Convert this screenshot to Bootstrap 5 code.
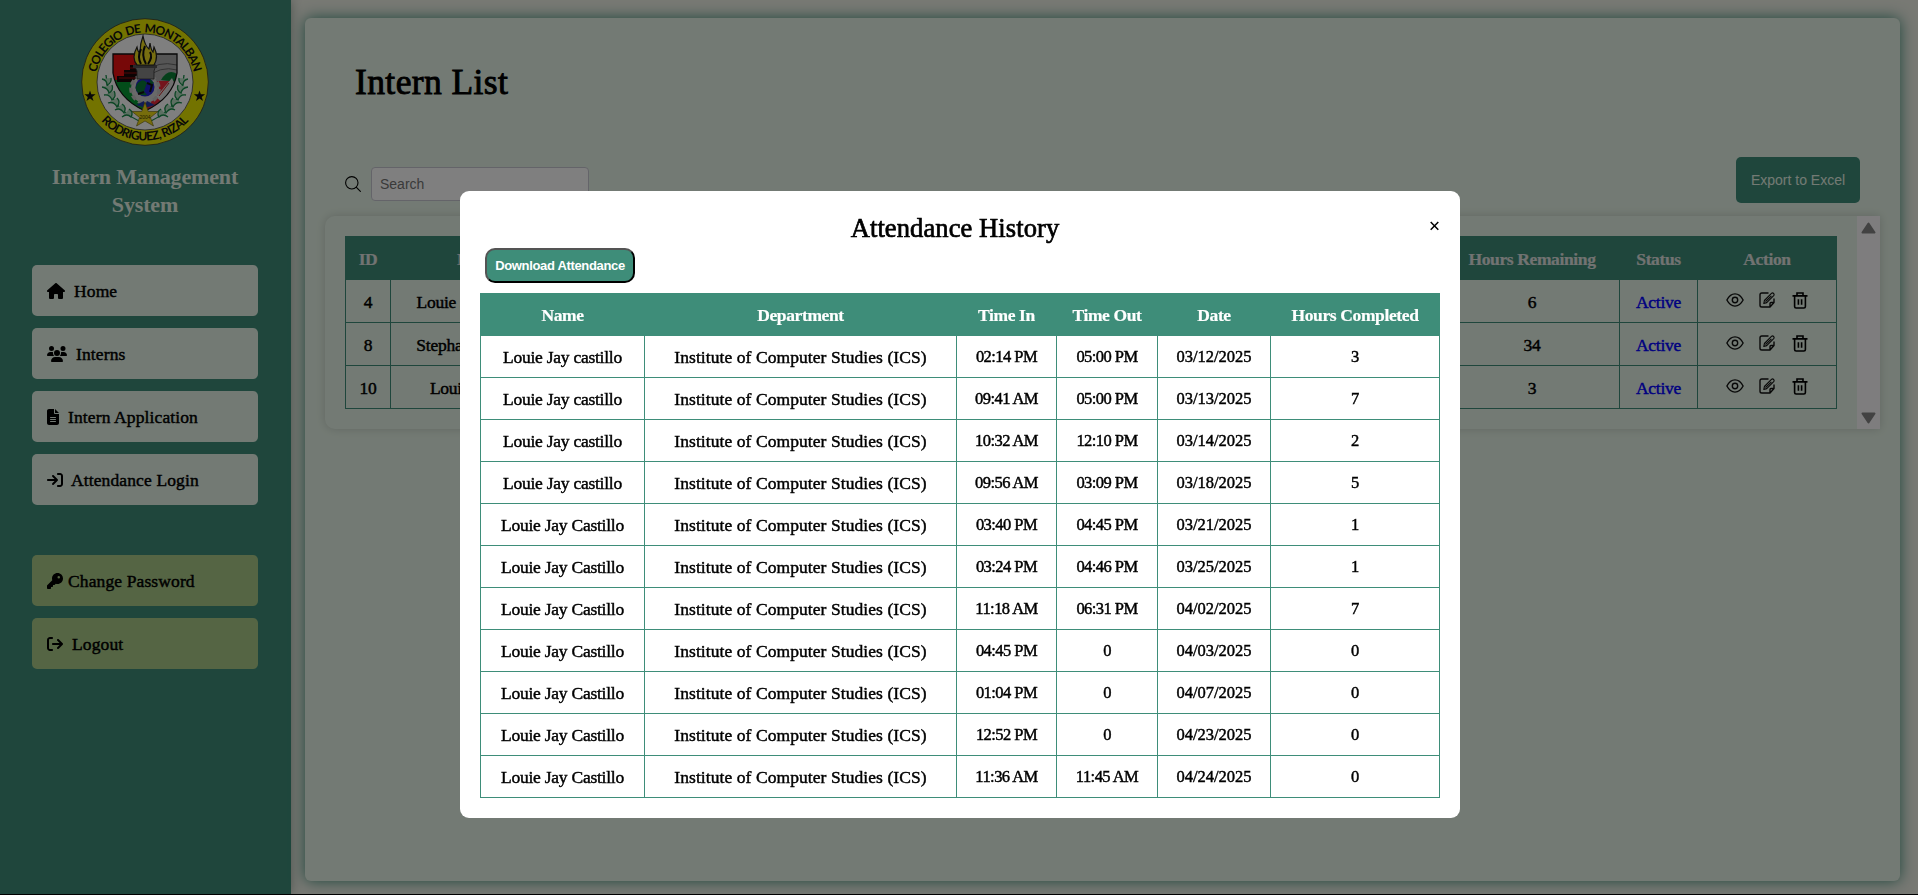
<!DOCTYPE html>
<html lang="en">
<head>
<meta charset="utf-8">
<meta name="viewport" content="width=device-width, initial-scale=1">
<title>Intern List</title>
<link href="https://cdn.jsdelivr.net/npm/bootstrap@5.3.0/dist/css/bootstrap.min.css" rel="stylesheet">
<style>
:root{--green:#3e8d79;--mint:#e7f5e8}
body{font-family:"Liberation Serif",serif;font-size:17.5px;line-height:24px;color:#000;background:#f0f2e8;height:895px;overflow:hidden;border-bottom:1px solid #000;-webkit-text-stroke:.45px}
.sidebar{width:291px;background:var(--green);box-shadow:0 0 10px rgba(60,80,70,.45);padding:18px 33px 0 32px}
.seal{width:128px;height:128px}
.brand{font-size:22px;line-height:28px;letter-spacing:-.15px;font-weight:700;color:var(--mint);margin:17px 0 46px;-webkit-text-stroke:0}
.side-link{height:51px;border-radius:5px;background:var(--mint);color:#000;padding:1px 0 0 15px;letter-spacing:.12px;text-decoration:none}
.side-link.alt{background:#aacb88}
.side-link svg{height:16px;fill:#000;flex:none;-webkit-text-stroke:0}
.side-group{gap:12px}
.main-wrap{padding:18px 18px 13px 14px}
.panel{background:var(--mint);border-radius:6px;box-shadow:0 0 15px var(--green);padding:0 20px}
.page-title{font-size:35.5px;letter-spacing:.4px;line-height:40px;margin:44px 0 0 30px;font-weight:400;-webkit-text-stroke:.9px}
.toolbar{margin-top:37px;height:77px;padding:0 20px}
.sans{font-family:"Liberation Sans",Arial,sans-serif;font-size:14px;-webkit-text-stroke:0}
.search-box{width:218px;height:34px;border:1px solid #c9c9d3;border-radius:4px;padding:0 8px;margin-left:10px}
.search-box::placeholder{color:#757575;opacity:1}
.btn-export{width:124px;height:46px;background:var(--green);color:var(--mint);border-radius:5px;border:0}
.list-card{height:213px;border-radius:10px 0 0 10px;box-shadow:0 0 10px rgba(0,0,0,.16);overflow:hidden}
.scroller{width:23px;background:#fcfafc;padding:6px 0 5px}
.grid-table{border-collapse:collapse;table-layout:fixed;text-align:center;line-height:20px}
.grid-table td,.grid-table th{border:1px solid var(--green);padding:2px 0 0;white-space:nowrap;overflow:hidden}
.grid-table th{background:var(--green);font-weight:700;color:#fff;letter-spacing:-.38px;-webkit-text-stroke:.2px}
.grid-table td{letter-spacing:-.25px}
.interns{width:1492px}
.interns th{height:43px;color:#e4e6e4}
.interns td{height:43px}
.status{color:#00f}
.overlay{background:rgba(0,0,0,.5);height:894px;overflow:hidden}
.overlay .modal-dialog{max-width:1000px;margin:191px auto 0 460px}
.overlay .modal-content{height:627px;border:0;border-radius:9px;padding:20px;color:#000}
.modal-heading{font-size:26.5px;letter-spacing:.1px;line-height:34px;padding-right:10px;height:34px;-webkit-text-stroke:.7px}
.close-x{width:14px;height:24px;margin-left:-14px;margin-top:3px}
.btn-dl{width:150px;height:35px;margin:3px 0 10px 5px;font-size:13px;font-weight:700;color:#fff;background:var(--green);border:2px outset #000;border-radius:10px;padding:0;letter-spacing:-.34px}
.attend{width:960px}
.attend th{height:42px}
.attend td{height:42px}
.grid-table.attend td,.grid-table.attend th{padding-top:0}
.attend .wide{letter-spacing:.07px}
.grid-table.attend .tm,.grid-table.attend .dt,.grid-table.attend .num{font-size:16.5px;padding-top:1px}
.attend .tm{letter-spacing:-.55px}
.attend .dt{letter-spacing:0}
</style>
</head>
<body>
<svg width="0" height="0" class="position-absolute">
  <defs>
    <symbol id="eye" viewBox="0 0 18 14"><g fill="none" stroke="#111" stroke-width="1.4"><path d="M.9 7C3 3 6 .9 9 .9S15 3 17.100 7C15 11 12 13.100 9 13.100S3 11 .9 7z"/><circle cx="9" cy="7" r="2.700"/></g></symbol>
    <symbol id="edit" viewBox="0 0 16 16"><g fill="none" stroke="#111" stroke-width="1.400" stroke-linejoin="round"><path d="M9.500 1H2.800Q1 1 1 2.800V13.200Q1 15 2.800 15H11M15 6.500V10.500L11 15V11.500Q11 10.500 12 10.500H15"/><path stroke-width="1.100" d="M4.800 11.500L5.400 8.500L12.700 1.200Q13.600.5 14.700 1.500Q15.500 2.600 14.700 3.600L7.700 10.600z M6.500 9.700L12.400 3.800"/></g></symbol>
    <symbol id="trash" viewBox="0 0 16 17"><g fill="none" stroke="#000" stroke-width="1.600"><path d="M.5 3.900H15.500M5 3.900V1H11V3.900M2.600 3.900V14.500Q2.600 16 4.100 16H11.900Q13.400 16 13.400 14.500V3.900M6.400 7.300V12.800M9.600 7.300V12.800"/></g></symbol>
  </defs>
</svg>
<div class="d-flex h-100">
  <nav class="sidebar d-flex flex-column flex-shrink-0">
    <svg class="seal mx-auto" viewBox="0 0 128 128">
      <defs>
        <path id="arcTop" d="M14.500 64A49.500 49.500 0 0 1 113.500 64"/>
        <path id="arcBot" d="M5.500 64A58.500 58.500 0 0 0 122.500 64"/>
        <clipPath id="shieldClip"><path d="M32 36H96V55Q92 80 64 93Q36 80 32 55z"/></clipPath>
      </defs>
      <circle cx="64" cy="64" r="63.300" fill="#e6e600" stroke="#333" stroke-width=".8"/>
      <circle cx="64" cy="64" r="48" fill="#fff" stroke="#444" stroke-width=".8"/>
      <g clip-path="url(#shieldClip)">
        <rect x="32" y="36" width="32" height="28" fill="#ee1010"/><rect x="64" y="36" width="32" height="28" fill="#aaa"/>
        <rect x="32" y="62" width="32" height="32" fill="#079b35"/><rect x="64" y="63" width="32" height="32" fill="#e92b3b"/>
        <path d="M43 52h6v-5h11v17H36v-6h7z" fill="#180808"/><path d="M38 60h22M42 55h18M48 50h12" stroke="#c11" stroke-width=".8"/>
        <path d="M64 55Q76 42 96 47M64 61Q79 47 96 52" fill="none" stroke="#666"/>
        <path d="M80 62Q87 50 96 56V64z" fill="#0a8135"/><path d="M75 79L91 60L95 69L82 85" fill="#ddd"/><path d="M78 78L88 65M82 84L94 67" stroke="#c22"/>
      </g>
      <path d="M32 36H96V55Q92 80 64 93Q36 80 32 55z" fill="none" stroke="#111" stroke-width="1.300"/>
      <circle cx="64" cy="71" r="14" fill="#d3d3d3" stroke="#c4c4c4" stroke-width="3.500" stroke-dasharray="5 3"/>
      <circle cx="64" cy="69" r="9.500" fill="#2020d0"/><path d="M56 66Q62 59 66 65L63 73L66 77Q57 79 54.500 70zM69 61l4 4-4 2z" fill="#087838"/><path d="M66 65l5 2-2 7M57 76l6-2" stroke="#111" stroke-width="2" fill="none"/>
      <path d="M53 47H75L73 53V61H56V53z" fill="#888" stroke="#333" stroke-width=".8"/><path d="M52 48.500H76" stroke="#555" stroke-width="3"/>
      <path d="M56 47Q50 40 56 29Q57 35 59 34Q59 26 62 18Q64 28 68 31L69 25Q70 32 72 34L73 29Q78 39 73 47z" fill="#eedc22" stroke="#222" stroke-width="1.200"/>
      <path d="M60 46Q56 39 60 31M65 46Q60 37 64 28M67 46Q72 39 69 34" fill="none" stroke="#111" stroke-width="2"/>
      <g fill="none" stroke="#188c4a" stroke-width="1.300">
        <path d="M25 57Q27 88 58 103"/><path d="M103 57Q101 88 70 103"/>
      </g>
      <g fill="#b8dfc4" stroke="#188c4a" stroke-width="1.300">
        <path d="M21 61q5 1 5 6 5-2 4-7M21 69q6 1 7 6 5-3 3-8M23 77q6-1 8 5 5-4 2-9M27 85q6-2 9 4 4-5 0-9M34 92q5-3 9 3 3-6-2-9M41 99q5-4 9 0 3-5-2-8"/>
        <path d="M107 61q-5 1-5 6-5-2-4-7M107 69q-6 1-7 6-5-3-3-8M105 77q-6-1-8 5-5-4-2-9M101 85q-6-2-9 4-4-5 0-9M94 92q-5-3-9 3-3-6 2-9M87 99q-5-4-9 0-3-5 2-8"/>
      </g>
      <path d="M55 87l8-4 1 4 2-4 8 4-7 2h-5z" fill="#2538a8"/>
      <path d="M64 84L67.300 93.500H77L69.500 99.500L72.500 108L64 103L55.500 108L58.500 99.500L51 93.500H60.700z" fill="#eedb18" stroke="#665b10" stroke-width=".6"/>
      <text x="64" y="100.500" text-anchor="middle" font-family="Liberation Sans" font-size="5" fill="#443a00" style="-webkit-text-stroke:0">2004</text>
      <g font-family="Lato,sans-serif" font-weight="700" font-size="12" fill="#111" style="-webkit-text-stroke:.2px">
        <text textLength="136"><textPath href="#arcTop" startOffset="50%" text-anchor="middle" textLength="136">COLEGIO&#160; DE&#160; MONTALBAN</textPath></text>
        <text textLength="99"><textPath href="#arcBot" startOffset="50%" text-anchor="middle" textLength="99">RODRIGUEZ, RIZAL</textPath></text>
      </g>
      <g fill="#111"><path d="M9 72.500l1.300 3.800h4.300l-3.400 2.600 1.300 4.200L9 80.600l-3.500 2.500 1.300-4.200-3.400-2.600h4.300z"/><path transform="translate(109.500)" d="M9 72.500l1.300 3.800h4.300l-3.400 2.600 1.300 4.200L9 80.600l-3.500 2.500 1.300-4.200-3.400-2.600h4.300z"/></g>
    </svg>
    <div class="brand text-center">Intern Management<br>System</div>
    <div class="side-group d-flex flex-column">
      <a class="side-link d-flex align-items-center"><svg width="18" viewBox="0 0 576 512"><path d="M575.800 255.500c0 18-15 32.100-32 32.100h-32l.7 160.200V472c0 22.100-17.900 40-40 40H392c-22.100 0-40-17.900-40-40V384c0-17.700-14.300-32-32-32H256c-17.700 0-32 14.300-32 32v88c0 22.100-17.900 40-40 40H104c-22.100 0-40-17.900-40-40V287.600H32c-18 0-32-14-32-32.100c0-9 3-17 10-24L266.400 8c7-7 15-8 22-8s15 2 21 7L564.800 231.500c8 7 12 15 11 24z"/></svg><span style="margin-left:9px">Home</span></a>
      <a class="side-link d-flex align-items-center"><svg width="20" viewBox="0 0 640 512"><path d="M144 0a80 80 0 1 1 0 160A80 80 0 1 1 144 0zM512 0a80 80 0 1 1 0 160A80 80 0 1 1 512 0zM0 298.700C0 239.800 47.800 192 106.700 192h42.700c15.900 0 31 3.500 44.600 9.700c-1.300 7.200-1.900 14.700-1.900 22.300c0 38.200 16.800 72.500 43.300 96H21.300C9.600 320 0 310.400 0 298.700zM405.300 320c26.600-23.500 43.300-57.800 43.300-96c0-7.600-.7-15-1.900-22.300c13.600-6.300 28.700-9.700 44.600-9.700h42.700C592.200 192 640 239.800 640 298.700c0 11.800-9.600 21.300-21.300 21.300H405.300zM224 224a96 96 0 1 1 192 0 96 96 0 1 1 -192 0zM128 485.300C128 411.700 187.700 352 261.300 352H378.700C452.300 352 512 411.700 512 485.300c0 14.700-11.900 26.700-26.700 26.700H154.700c-14.700 0-26.700-11.900-26.700-26.700z"/></svg><span style="margin-left:9px">Interns</span></a>
      <a class="side-link d-flex align-items-center"><svg width="12" viewBox="0 0 384 512"><path d="M64 0C28.700 0 0 28.700 0 64V448c0 35.300 28.700 64 64 64H320c35.300 0 64-28.700 64-64V160H256c-17.700 0-32-14.300-32-32V0H64zM256 0V128H384L256 0zM112 256H272a16 16 0 0 1 0 32H112a16 16 0 0 1 0-32zm0 64H272a16 16 0 0 1 0 32H112a16 16 0 0 1 0-32zm0 64H272a16 16 0 0 1 0 32H112a16 16 0 0 1 0-32z" fill-rule="evenodd"/></svg><span style="margin-left:9px">Intern Application</span></a>
      <a class="side-link d-flex align-items-center"><svg width="16" viewBox="0 0 512 512"><path d="M352 96l64 0c17.700 0 32 14.300 32 32l0 256c0 17.700-14.300 32-32 32l-64 0c-17.700 0-32 14.300-32 32s14.300 32 32 32l64 0c53 0 96-43 96-96l0-256c0-53-43-96-96-96l-64 0c-17.700 0-32 14.300-32 32s14.300 32 32 32zm-9.400 182.600c12.500-12.500 12.500-32.800 0-45.300l-128-128c-12.500-12.500-32.800-12.500-45.300 0s-12.500 32.800 0 45.300L242.700 224 32 224c-17.700 0-32 14.300-32 32s14.300 32 32 32l210.700 0-73.400 73.400c-12.500 12.500-12.500 32.800 0 45.300s32.800 12.500 45.300 0l128-128z"/></svg><span style="margin-left:8px">Attendance Login</span></a>
    </div>
    <div class="side-group d-flex flex-column" style="margin-top:50px">
      <a class="side-link alt d-flex align-items-center"><svg width="16" viewBox="0 0 512 512"><path d="M336 352c97.200 0 176-78.800 176-176S433.200 0 336 0S160 78.800 160 176c0 18.700 2.900 36.800 8.300 53.700L7 391c-4.500 4.500-7 10.600-7 17v80c0 13.300 10.700 24 24 24h80c13.300 0 24-10.700 24-24V448h40c13.300 0 24-10.700 24-24V384h40c6.400 0 12.500-2.500 17-7l33.300-33.300c16.900 5.400 35 8.300 53.700 8.300zM376 96a40 40 0 1 1 0 80 40 40 0 1 1 0-80z" fill-rule="evenodd"/></svg><span style="margin-left:5px">Change Password</span></a>
      <a class="side-link alt d-flex align-items-center"><svg width="16" viewBox="0 0 512 512"><path d="M502.600 278.600c12.500-12.500 12.500-32.800 0-45.300l-128-128c-12.500-12.500-32.800-12.500-45.300 0s-12.500 32.800 0 45.300L402.700 224 192 224c-17.700 0-32 14.300-32 32s14.300 32 32 32l210.700 0-73.400 73.400c-12.500 12.500-12.500 32.800 0 45.300s32.800 12.500 45.300 0l128-128zM160 96c17.700 0 32-14.300 32-32s-14.300-32-32-32L96 32C43 32 0 75 0 128L0 384c0 53 43 96 96 96l64 0c17.700 0 32-14.300 32-32s-14.300-32-32-32l-64 0c-17.700 0-32-14.300-32-32l0-256c0-17.700 14.300-32 32-32l64 0z"/></svg><span style="margin-left:9px">Logout</span></a>
    </div>
  </nav>
  <main class="main-wrap flex-grow-1">
    <section class="panel h-100 d-flex flex-column">
      <h1 class="page-title">Intern List</h1>
      <div class="toolbar d-flex justify-content-between">
        <div class="d-flex align-items-center h-100" style="padding-top:12px">
          <svg width="16" height="16" viewBox="0 0 16 16" fill="none" stroke="#000" stroke-width="1.100"><circle cx="6.800" cy="6.800" r="6.200"/><path d="M11.200 11.200L15.700 15.700"/></svg>
          <input class="search-box sans bg-white" placeholder="Search">
        </div>
        <button class="btn-export sans" style="margin-top:18px">Export to Excel</button>
      </div>
      <div class="list-card d-flex justify-content-between">
        <div style="padding:20px 0 20px 20px">
          <table class="grid-table interns">
            <colgroup><col style="width:45px"><col style="width:175px"><col style="width:320px"><col style="width:280px"><col style="width:279px"><col style="width:175px"><col style="width:78px"><col style="width:139px"></colgroup>
            <thead><tr><th>ID</th><th>Name</th><th>Department</th><th>Hours Needed</th><th>Hours Completed</th><th>Hours Remaining</th><th>Status</th><th>Action</th></tr></thead>
            <tbody id="internRows"></tbody>
          </table>
        </div>
        <div class="scroller d-flex flex-column justify-content-between align-items-center">
          <svg width="15" height="12" viewBox="0 0 15 12"><path d="M7.500 1.500L13.500 10.500H1.500z" fill="#858585" stroke="#858585" stroke-width="2" stroke-linejoin="round"/></svg>
          <svg width="15" height="12" viewBox="0 0 15 12"><path d="M7.500 10.500L13.500 1.500H1.500z" fill="#858585" stroke="#858585" stroke-width="2" stroke-linejoin="round"/></svg>
        </div>
      </div>
    </section>
  </main>
</div>

<div class="modal overlay show d-block" tabindex="-1">
  <div class="modal-dialog">
    <div class="modal-content">
      <div class="d-flex">
        <div class="modal-heading flex-grow-1 text-center">Attendance History</div>
        <svg class="close-x" viewBox="0 0 14 24"><path d="M4.700 8L12.300 15.800M12.300 8L4.700 15.800" stroke="#000" stroke-width="1.500"/></svg>
      </div>
      <button class="btn-dl sans">Download Attendance</button>
      <table class="grid-table attend">
        <colgroup><col style="width:164px"><col style="width:312px"><col style="width:100px"><col style="width:101px"><col style="width:113px"><col style="width:169px"></colgroup>
        <thead><tr><th>Name</th><th>Department</th><th>Time In</th><th>Time Out</th><th>Date</th><th>Hours Completed</th></tr></thead>
        <tbody id="attendRows"></tbody>
      </table>
    </div>
  </div>
</div>
<script src="https://cdn.jsdelivr.net/npm/bootstrap@5.3.0/dist/js/bootstrap.bundle.min.js"></script>
<script>
const dept = "Institute of Computer Studies (ICS)";
const attendance = [
  ["Louie Jay castillo","02:14 PM","05:00 PM","03/12/2025",3],
  ["Louie Jay castillo","09:41 AM","05:00 PM","03/13/2025",7],
  ["Louie Jay castillo","10:32 AM","12:10 PM","03/14/2025",2],
  ["Louie Jay castillo","09:56 AM","03:09 PM","03/18/2025",5],
  ["Louie Jay Castillo","03:40 PM","04:45 PM","03/21/2025",1],
  ["Louie Jay Castillo","03:24 PM","04:46 PM","03/25/2025",1],
  ["Louie Jay Castillo","11:18 AM","06:31 PM","04/02/2025",7],
  ["Louie Jay Castillo","04:45 PM","0","04/03/2025",0],
  ["Louie Jay Castillo","01:04 PM","0","04/07/2025",0],
  ["Louie Jay Castillo","12:52 PM","0","04/23/2025",0],
  ["Louie Jay Castillo","11:36 AM","11:45 AM","04/24/2025",0]
];
document.getElementById("attendRows").innerHTML = attendance.map(([n,i,o,d,h]) =>
  `<tr><td>${n}</td><td class="wide">${dept}</td><td class="tm">${i}</td><td class="tm">${o}</td><td class="dt">${d}</td><td class="num">${h}</td></tr>`).join("");
const interns = [[4,"Louie Jay Castillo",6],[8,"Stephanie Castillo",34],[10,"Louie Castillo",3]];
const icon = (id,w,h,m) => `<svg width="${w}" height="${h}" style="margin-left:${m}px"><use href="#${id}"/></svg>`;
document.getElementById("internRows").innerHTML = interns.map(([id,n,h]) =>
  `<tr><td>${id}</td><td>${n}</td><td></td><td></td><td></td><td>${h}</td><td class="status">Active</td><td><div class="d-flex justify-content-center align-items-center pb-1">${icon("eye",18,14,0)}${icon("edit",16,16,15)}${icon("trash",16,17,17)}</div></td></tr>`).join("");
</script>
</body>
</html>
